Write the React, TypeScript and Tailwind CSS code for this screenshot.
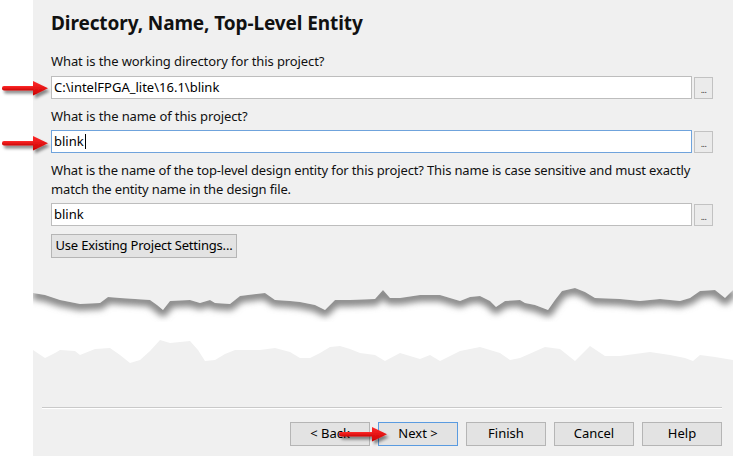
import React from "react";

const topEdge: [number, number][] = [
  [33, 295], [45, 297], [60, 302], [80, 306], [100, 305], [108, 299], [120, 300], [150, 302],
  [157, 307], [163, 312], [170, 303], [190, 302], [200, 305], [210, 302], [215, 305], [230, 306],
  [240, 298], [265, 295], [275, 302], [290, 303], [300, 304], [315, 307], [325, 312], [335, 302],
  [350, 302], [375, 301], [383, 292], [390, 300], [400, 300], [420, 297], [440, 297], [450, 300],
  [460, 303], [470, 299], [480, 298], [490, 303], [496, 309], [505, 303], [520, 302], [525, 305],
  [535, 307], [548, 312], [555, 302], [562, 293], [575, 290], [585, 294], [595, 300], [620, 301],
  [640, 303], [650, 302], [660, 301], [680, 303], [690, 300], [700, 293], [715, 292], [725, 300],
  [733, 292],
];

const bottomEdge: [number, number][] = [
  [33, 352], [45, 360], [55, 355], [60, 352], [75, 353], [80, 357], [95, 351], [110, 350],
  [120, 357], [130, 365], [140, 362], [150, 353], [160, 342], [170, 345], [190, 343], [198, 352],
  [205, 363], [215, 362], [225, 356], [235, 352], [260, 352], [275, 350], [290, 354], [300, 360],
  [310, 360], [320, 355], [330, 349], [340, 348], [350, 351], [360, 355], [375, 357], [385, 363],
  [400, 355], [420, 361], [430, 357], [440, 363], [460, 353], [480, 349], [500, 355], [510, 362],
  [520, 360], [545, 349], [560, 351], [575, 363], [590, 348], [605, 358], [620, 358], [650, 354],
  [670, 357], [685, 360], [693, 363], [700, 357], [715, 359], [733, 362],
];

// svg is placed at y=285, x=33
const OX = 33;
const OY = 285;
const pt = (p: [number, number]) => `${p[0] - OX},${p[1] - OY}`;
const whiteShape =
  topEdge.map(pt).join(" ") + " " + [...bottomEdge].reverse().map(pt).join(" ");
const topLine = topEdge.map(pt).join(" ");

const TornPaper = () => (
  <svg width="700" height="85" viewBox="0 0 700 85" className="block">
    <defs>
      <clipPath id="paper">
        <polygon points={whiteShape} />
      </clipPath>
      <filter id="soft" x="-5%" y="-50%" width="110%" height="200%">
        <feGaussianBlur stdDeviation="3.2" />
      </filter>
    </defs>
    <polygon points={whiteShape} fill="#ffffff" />
    <g clipPath="url(#paper)">
      <polyline
        points={topLine}
        fill="none"
        stroke="#8a8a8a"
        strokeWidth="11"
        strokeLinejoin="round"
        filter="url(#soft)"
        transform="translate(0 1)"
      />
    </g>
  </svg>
);

const Arrow = ({ w = 48 }: { w?: number }) => (
  <svg width={w + 6} height="24" viewBox={`0 0 ${w + 6} 24`}>
    <defs>
      <linearGradient id="red" x1="0" y1="0" x2="0" y2="1">
        <stop offset="0" stopColor="#ff2a2a" />
        <stop offset="1" stopColor="#cc0000" />
      </linearGradient>
      <filter id="ds" x="-20%" y="-50%" width="140%" height="220%">
        <feDropShadow dx="2" dy="3" stdDeviation="1.6" floodColor="#000" floodOpacity="0.45" />
      </filter>
    </defs>
    <g filter="url(#ds)">
      <rect x="2" y="8" width={w - 14} height="4.5" rx="2" fill="url(#red)" />
      <polygon points={`${w - 15},3 ${w},10.2 ${w - 15},17.5`} fill="url(#red)" />
    </g>
  </svg>
);

const Field = ({ value, focused }: { value: string; focused?: boolean }) => (
  <div className="flex items-center gap-[2px]">
    <div
      className={`flex-1 h-[23px] bg-white border flex items-center px-[2px] text-[13px] text-black ${
        focused ? "border-[#6fa3dc]" : "border-[#bdbdbd]"
      }`}
    >
      {value}
      {focused && <span className="inline-block w-px h-[15px] bg-black ml-px" />}
    </div>
    <div className="w-[19px] h-[22px] bg-[#ebebeb] border border-[#c2c2c2] flex items-end justify-center pb-[4px]">
      <span className="text-[9px] leading-none tracking-[-0.5px] text-[#333]">...</span>
    </div>
  </div>
);

const Btn = ({ label, primary }: { label: string; primary?: boolean }) => (
  <div
    className={`w-[80px] h-[24px] flex items-center justify-center bg-[#e3e3e3] border text-[13px] text-black ${
      primary ? "border-[#5a9be0]" : "border-[#b5b5b5]"
    }`}
  >
    {label}
  </div>
);

export default function App() {
  return (
    <div
      className="relative flex w-[733px] h-[456px] bg-white overflow-hidden"
      style={{ fontFamily: '"Noto Sans", "Open Sans", Arial, sans-serif' }}
    >
      <div className="w-[33px] bg-white" />
      <div className="flex-1 bg-[#f0f0f0] flex flex-col">
        <div className="pl-[18px] pr-[20px]">
          <h1 className="pt-[11px] h-[44px] text-[19px] leading-[24px] font-bold text-[#111] tracking-[-0.1px]">
            Directory, Name, Top-Level Entity
          </h1>
          <p className="mt-[8px] text-[13px] leading-[19px] text-[#111] tracking-[-0.1px]">
            What is the working directory for this project?
          </p>
          <div className="mt-[5px]">
            <Field value="C:\intelFPGA_lite\16.1\blink" />
          </div>
          <p className="mt-[8px] text-[13px] leading-[19px] text-[#111] tracking-[-0.1px]">
            What is the name of this project?
          </p>
          <div className="mt-[4px]">
            <Field value="blink" focused />
          </div>
          <p className="mt-[8px] text-[13px] leading-[19px] text-[#111] tracking-[-0.15px]">
            What is the name of the top-level design entity for this project? This name is case
            sensitive and must exactly match the entity name in the design file.
          </p>
          <div className="mt-[4px]">
            <Field value="blink" />
          </div>
          <div className="mt-[8px] w-[186px] h-[24px] flex items-center justify-center bg-[#e3e3e3] border border-[#b5b5b5] text-[13px] text-black whitespace-nowrap tracking-[-0.2px]">
            Use Existing Project Settings...
          </div>
        </div>
        <div className="mt-[25px]">
          <TornPaper />
        </div>
        <div className="flex-1" />
        <div className="ml-[9px] mr-[11px] border-t border-[#c9c9c9] border-b border-b-white" />
        <div className="flex justify-end gap-[8px] pr-[11px] pt-[13px] pb-[10px]">
          <Btn label="< Back" />
          <Btn label="Next >" primary />
          <Btn label="Finish" />
          <Btn label="Cancel" />
          <Btn label="Help" />
        </div>
      </div>

      <div className="absolute left-0 top-[78px]">
        <Arrow />
      </div>
      <div className="absolute left-0 top-[133px]">
        <Arrow />
      </div>
      <div className="absolute left-[337px] top-[424px]">
        <Arrow w={50} />
      </div>
    </div>
  );
}
